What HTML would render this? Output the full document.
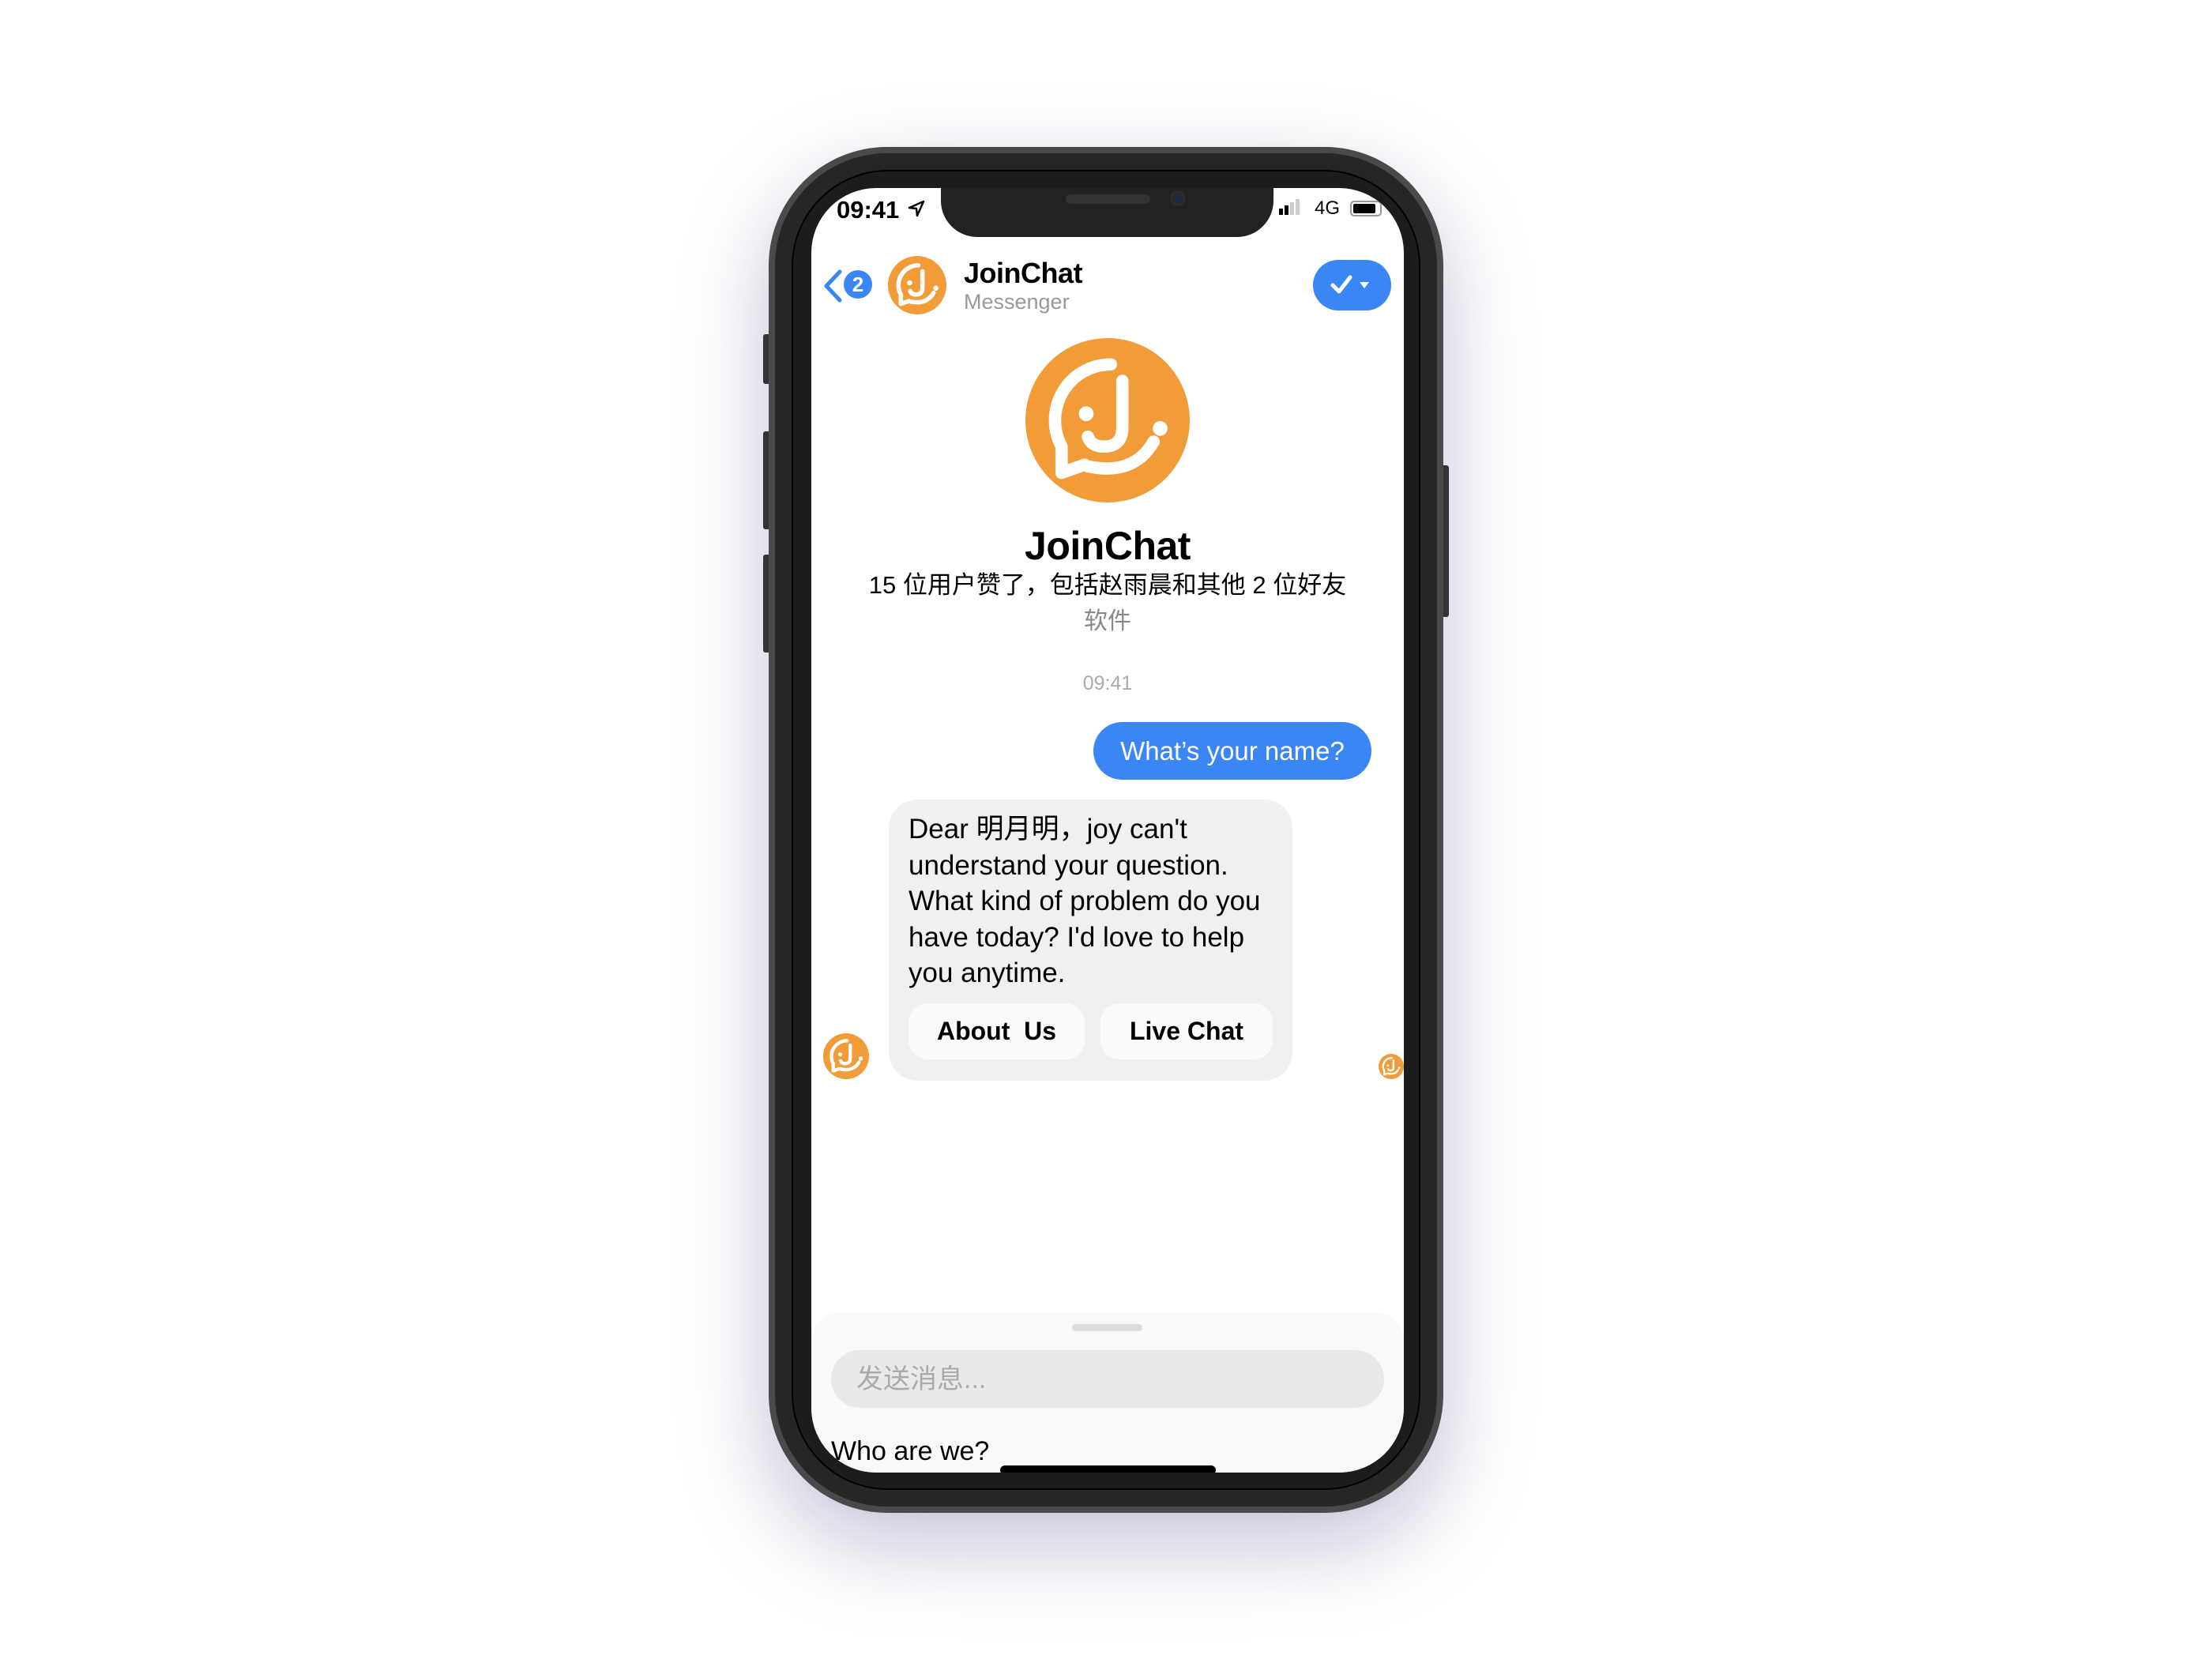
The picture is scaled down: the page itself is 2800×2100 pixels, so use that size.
<!DOCTYPE html>
<html><head><meta charset="utf-8"><style>
*{margin:0;padding:0;box-sizing:border-box}
body{width:2800px;height:2100px;background:#fff;position:relative;overflow:hidden;font-family:"Liberation Sans","Noto Sans CJK SC",sans-serif}
.a{position:absolute}
.t{position:absolute;white-space:nowrap;line-height:1}
</style></head><body>
<svg width="0" height="0" style="position:absolute"><defs>
<g id="logo"><circle cx="50" cy="50" r="50" fill="#f19c38"/>
<g fill="none" stroke="#fff" stroke-width="7.5" stroke-linecap="round" stroke-linejoin="round">
<path d="M52 16 A34 34 0 0 0 22 66 L22 82 L36 77"/>
<path d="M78 63 Q66 84 38 78"/>
<path d="M59 26 L59 54 Q59 66 48 66 Q40 66 38 60"/></g>
<circle cx="37" cy="46" r="4.5" fill="#fff"/><circle cx="82" cy="55" r="4.5" fill="#fff"/></g>
</defs></svg>
<div class="a" style="left:973px;top:186px;width:854px;height:1729px;border-radius:150px;box-shadow:0 40px 110px rgba(90,80,140,0.35)"></div>
<div class="a" style="left:966px;top:423px;width:10px;height:63px;background:#333;border-radius:3px"></div>
<div class="a" style="left:966px;top:546px;width:10px;height:124px;background:#333;border-radius:3px"></div>
<div class="a" style="left:966px;top:702px;width:10px;height:124px;background:#333;border-radius:3px"></div>
<div class="a" style="left:1824px;top:589px;width:10px;height:192px;background:#333;border-radius:3px"></div>
<div class="a" style="left:973px;top:186px;width:854px;height:1729px;border-radius:150px;background:#4a4a4a"></div>
<div class="a" style="left:981px;top:194px;width:838px;height:1713px;border-radius:142px;background:#262626"></div>
<div class="a" style="left:1002px;top:215px;width:796px;height:1671px;border-radius:122px;background:#1c1c1c;border:2px solid #000"></div>
<div class="a" style="left:1027px;top:238px;width:750px;height:1626px;border-radius:82px;background:#fff;overflow:hidden">
 <div class="a" style="left:164px;top:-10px;width:421px;height:72px;background:#222;border-radius:0 0 46px 46px"></div>
 <div class="a" style="left:322px;top:8px;width:107px;height:12px;background:#333;border-radius:6px"></div>
 <div class="a" style="left:454px;top:3px;width:20px;height:20px;background:#1a2a45;border-radius:50%;border:4px solid #2c2c2c"></div>
 <div class="t" style="left:32px;top:12px;font-size:31px;font-weight:bold;color:#000">09:41</div>
 <svg class="a" style="left:122px;top:15px" width="22" height="22" viewBox="0 0 22 22"><path d="M20 2 L2 10 L11 11 L12 20 Z" fill="none" stroke="#000" stroke-width="2.5" stroke-linejoin="round"/></svg>
 <div class="a" style="left:592px;top:26px;width:5px;height:8px;background:#000"></div>
 <div class="a" style="left:599px;top:22px;width:5px;height:12px;background:#000"></div>
 <div class="a" style="left:606px;top:18px;width:5px;height:16px;background:#ccc"></div>
 <div class="a" style="left:613px;top:14px;width:5px;height:20px;background:#ccc"></div>
 <div class="t" style="left:637px;top:14px;font-size:24px;color:#000">4G</div>
 <div class="a" style="left:682px;top:16px;width:40px;height:20px;border:2px solid #999;border-radius:5px;padding:2px"><div style="width:28px;height:12px;background:#000;border-radius:2px"></div></div>
 <svg class="a" style="left:12px;top:102px" width="30" height="44" viewBox="0 0 30 44"><path d="M24 4 L7 22 L24 40" fill="none" stroke="#3a86f5" stroke-width="5" stroke-linecap="round" stroke-linejoin="round"/></svg>
 <div class="a" style="left:41px;top:104px;width:36px;height:36px;border-radius:50%;background:#3a86f5;color:#fff;font-size:26px;font-weight:bold;text-align:center;line-height:36px">2</div>
 <svg class="a" style="left:97px;top:86px" width="74" height="74" viewBox="0 0 100 100"><use href="#logo"/></svg>
 <div class="t" style="left:193px;top:90px;font-size:36px;font-weight:bold;color:#000;letter-spacing:-0.5px">JoinChat</div>
 <div class="t" style="left:193px;top:131px;font-size:27px;color:#999">Messenger</div>
 <div class="a" style="left:635px;top:91px;width:99px;height:64px;border-radius:32px;background:#3a86f5"></div>
 <svg class="a" style="left:656px;top:108px" width="60" height="30" viewBox="0 0 60 30"><path d="M4 15 L12 23 L26 5" fill="none" stroke="#fff" stroke-width="5" stroke-linecap="round" stroke-linejoin="round"/><path d="M38 11 L50 11 L44 19 Z" fill="#fff"/></svg>
 <svg class="a" style="left:271px;top:190px" width="208" height="208" viewBox="0 0 100 100"><use href="#logo"/></svg>
 <div class="t" style="left:0;width:750px;text-align:center;top:428px;font-size:50px;font-weight:bold;color:#000;letter-spacing:-0.5px">JoinChat</div>
 <div class="t" style="left:0;width:750px;text-align:center;top:487px;font-size:31px;color:#000">15 位用户赞了，包括赵雨晨和其他 2 位好友</div>
 <div class="t" style="left:0;width:750px;text-align:center;top:534px;font-size:30px;color:#888">软件</div>
 <div class="t" style="left:0;width:750px;text-align:center;top:615px;font-size:25px;color:#aaa">09:41</div>
 <div class="a" style="left:357px;top:676px;width:352px;height:73px;border-radius:37px;background:#3a86f5;color:#fff;font-size:33px;line-height:73px;text-align:center">What’s your name?</div>
 <div class="a" style="left:98px;top:774px;width:511px;height:356px;border-radius:36px;background:#f0f0f0"></div>
 <div class="a" style="left:123px;top:789px;font-size:35px;line-height:45.5px;color:#000;width:480px">Dear 明月明，joy can't<br>understand your question.<br>What kind of problem do you<br>have today? I'd love to help<br>you anytime.</div>
 <div class="a" style="left:123px;top:1032px;width:223px;height:71px;border-radius:24px;background:#fafafa;font-size:32px;font-weight:bold;line-height:71px;text-align:center">About&nbsp; Us</div>
 <div class="a" style="left:366px;top:1032px;width:218px;height:71px;border-radius:24px;background:#fafafa;font-size:32px;font-weight:bold;line-height:71px;text-align:center">Live Chat</div>
 <svg class="a" style="left:15px;top:1070px" width="58" height="58" viewBox="0 0 100 100"><use href="#logo"/></svg>
 <svg class="a" style="left:718px;top:1096px" width="32" height="32" viewBox="0 0 100 100"><use href="#logo"/></svg>
 <div class="a" style="left:0;top:1423px;width:750px;height:220px;border-radius:36px 36px 0 0;background:#f9f9f9"></div>
 <div class="a" style="left:330px;top:1438px;width:89px;height:9px;border-radius:5px;background:#ddd"></div>
 <div class="a" style="left:25px;top:1471px;width:700px;height:73px;border-radius:37px;background:#e9e9e9"></div>
 <div class="t" style="left:57px;top:1491px;font-size:34px;color:#aaa">发送消息...</div>
 <div class="t" style="left:25px;top:1582px;font-size:34px;color:#000">Who are we?</div>
 <div class="a" style="left:239px;top:1617px;width:273px;height:12px;border-radius:6px;background:#000"></div>
</div>
</body></html>
